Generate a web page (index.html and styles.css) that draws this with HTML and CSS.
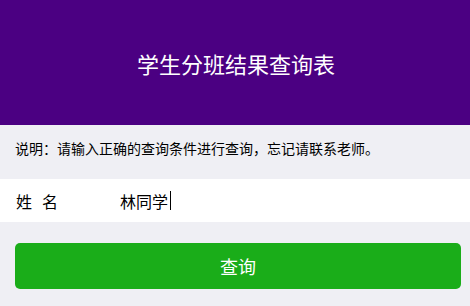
FILE: index.html
```html
<!DOCTYPE html>
<html lang="zh-CN">
<head>
<meta charset="utf-8">
<title>学生分班结果查询表</title>
<link rel="stylesheet" href="styles.css">
</head>
<body>
<header class="header">
  <h1 class="title">学生分班结果查询表</h1>
</header>
<p class="note">说明：请输入正确的查询条件进行查询，忘记请联系老师。</p>
<div class="form-row">
  <label class="label"><span class="label-first">姓</span>名</label>
  <div class="input">林同学<span class="caret"></span></div>
</div>
<div class="actions">
  <button class="btn">查询</button>
</div>
</body>
</html>
```
FILE: styles.css
```css
html, body {
  margin: 0;
  padding: 0;
  background: #efeff4;
  font-family: "Noto Sans CJK SC", "Liberation Sans", sans-serif;
  color: #000;
}
.header {
  height: 125px;
  background: #4b0082;
  display: flex;
  align-items: center;
  justify-content: center;
}
.title {
  margin: 0;
  font-size: 22px;
  font-weight: normal;
  color: #fff;
  line-height: 1;
  padding-left: 2px;
}
.note {
  margin: 0;
  height: 54px;
  box-sizing: border-box;
  padding: 13px 15px 0;
  font-size: 14px;
  line-height: 20px;
}
.form-row {
  height: 43px;
  background: #fff;
  display: flex;
  align-items: center;
  padding: 0 15px;
  font-size: 16px;
}
.label {
  width: 104px;
  padding-left: 1px;
  line-height: 20px;
}
.label-first {
  margin-right: 10px;
}
.input {
  display: flex;
  align-items: center;
  line-height: 20px;
}
.caret {
  display: inline-block;
  width: 1px;
  height: 19px;
  background: #000;
  margin-left: 2px;
}
.actions {
  padding: 21px 9px 0 15px;
}
.btn {
  display: block;
  width: 100%;
  height: 46px;
  border: 0;
  border-radius: 5px;
  background: #1aad19;
  color: #fff;
  font-family: inherit;
  font-size: 18px;
  line-height: 44px;
  padding: 0;
}
```
